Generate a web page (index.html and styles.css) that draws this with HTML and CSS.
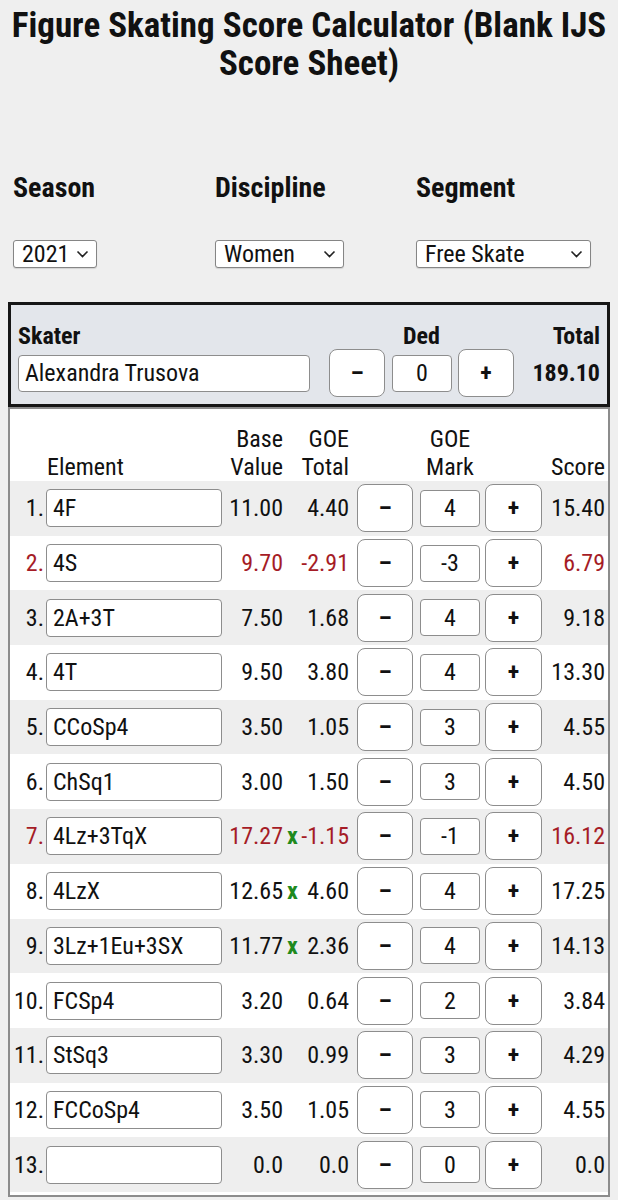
FILE: index.html
```html
<!DOCTYPE html>
<html lang="en">
  <head>
    <meta charset="UTF-8" />
    <meta name="viewport" content="width=device-width, initial-scale=1.0" />
    <title>Figure Skating Score Calculator</title>
    <link rel="stylesheet" href="styles.css">
  </head>

  <body>
    <h1 class="title">Figure Skating Score Calculator (Blank IJS Score Sheet)</h1>

    <div class="settings">
      <div class="setting">
        <h2>Season</h2>
        <span class="select-wrap">
          <select class="sel-season"><option>2021</option></select>
          <svg class="chevron" width="13" height="8" viewBox="0 0 13 8"><path d="M1.5 1.5l5 5 5-5" fill="none" stroke="#222" stroke-width="1.6" /></svg>
        </span>
      </div>
      <div class="setting">
        <h2>Discipline</h2>
        <span class="select-wrap">
          <select class="sel-discipline"><option>Women</option></select>
          <svg class="chevron" width="13" height="8" viewBox="0 0 13 8"><path d="M1.5 1.5l5 5 5-5" fill="none" stroke="#222" stroke-width="1.6" /></svg>
        </span>
      </div>
      <div class="setting">
        <h2>Segment</h2>
        <span class="select-wrap">
          <select class="sel-segment"><option>Free Skate</option></select>
          <svg class="chevron" width="13" height="8" viewBox="0 0 13 8"><path d="M1.5 1.5l5 5 5-5" fill="none" stroke="#222" stroke-width="1.6" /></svg>
        </span>
      </div>
    </div>

    <div class="skater">
      <div class="lbl">Skater</div>
      <div class="lbl center">Ded</div>
      <div class="lbl right">Total</div>
      <input class="skater-name" type="text" value="Alexandra Trusova" />
      <div class="stepper">
        <button class="btn">&ndash;</button>
        <input class="mark" type="text" value="0" />
        <button class="btn">+</button>
      </div>
      <div class="total">189.10</div>
    </div>

    <div class="sheet">
      <div class="row head">
        <div></div>
        <div class="h-el">Element</div>
        <div class="num">Base<br />Value</div>
        <div class="num">GOE<br />Total</div>
        <div></div>
        <div class="h-mark">GOE<br />Mark</div>
        <div></div>
        <div class="num">Score</div>
      </div>

      <div class="rows">
        <div class="row">
          <div class="no">1.</div><input class="el" value="4F" />
          <div class="num">11.00</div><div class="goe"><span class="v">4.40</span></div>
          <button class="btn">&ndash;</button><input class="mark" value="4" /><button class="btn">+</button>
          <div class="num">15.40</div>
        </div>
        <div class="row red">
          <div class="no">2.</div><input class="el" value="4S" />
          <div class="num">9.70</div><div class="goe"><span class="v">-2.91</span></div>
          <button class="btn">&ndash;</button><input class="mark" value="-3" /><button class="btn">+</button>
          <div class="num">6.79</div>
        </div>
        <div class="row">
          <div class="no">3.</div><input class="el" value="2A+3T" />
          <div class="num">7.50</div><div class="goe"><span class="v">1.68</span></div>
          <button class="btn">&ndash;</button><input class="mark" value="4" /><button class="btn">+</button>
          <div class="num">9.18</div>
        </div>
        <div class="row">
          <div class="no">4.</div><input class="el" value="4T" />
          <div class="num">9.50</div><div class="goe"><span class="v">3.80</span></div>
          <button class="btn">&ndash;</button><input class="mark" value="4" /><button class="btn">+</button>
          <div class="num">13.30</div>
        </div>
        <div class="row">
          <div class="no">5.</div><input class="el" value="CCoSp4" />
          <div class="num">3.50</div><div class="goe"><span class="v">1.05</span></div>
          <button class="btn">&ndash;</button><input class="mark" value="3" /><button class="btn">+</button>
          <div class="num">4.55</div>
        </div>
        <div class="row">
          <div class="no">6.</div><input class="el" value="ChSq1" />
          <div class="num">3.00</div><div class="goe"><span class="v">1.50</span></div>
          <button class="btn">&ndash;</button><input class="mark" value="3" /><button class="btn">+</button>
          <div class="num">4.50</div>
        </div>
        <div class="row red">
          <div class="no">7.</div><input class="el" value="4Lz+3TqX" />
          <div class="num">17.27</div><div class="goe"><span class="x">x</span><span class="v">-1.15</span></div>
          <button class="btn">&ndash;</button><input class="mark" value="-1" /><button class="btn">+</button>
          <div class="num">16.12</div>
        </div>
        <div class="row">
          <div class="no">8.</div><input class="el" value="4LzX" />
          <div class="num">12.65</div><div class="goe"><span class="x">x</span><span class="v">4.60</span></div>
          <button class="btn">&ndash;</button><input class="mark" value="4" /><button class="btn">+</button>
          <div class="num">17.25</div>
        </div>
        <div class="row">
          <div class="no">9.</div><input class="el" value="3Lz+1Eu+3SX" />
          <div class="num">11.77</div><div class="goe"><span class="x">x</span><span class="v">2.36</span></div>
          <button class="btn">&ndash;</button><input class="mark" value="4" /><button class="btn">+</button>
          <div class="num">14.13</div>
        </div>
        <div class="row">
          <div class="no">10.</div><input class="el" value="FCSp4" />
          <div class="num">3.20</div><div class="goe"><span class="v">0.64</span></div>
          <button class="btn">&ndash;</button><input class="mark" value="2" /><button class="btn">+</button>
          <div class="num">3.84</div>
        </div>
        <div class="row">
          <div class="no">11.</div><input class="el" value="StSq3" />
          <div class="num">3.30</div><div class="goe"><span class="v">0.99</span></div>
          <button class="btn">&ndash;</button><input class="mark" value="3" /><button class="btn">+</button>
          <div class="num">4.29</div>
        </div>
        <div class="row">
          <div class="no">12.</div><input class="el" value="FCCoSp4" />
          <div class="num">3.50</div><div class="goe"><span class="v">1.05</span></div>
          <button class="btn">&ndash;</button><input class="mark" value="3" /><button class="btn">+</button>
          <div class="num">4.55</div>
        </div>
        <div class="row">
          <div class="no">13.</div><input class="el" value="" />
          <div class="num">0.0</div><div class="goe"><span class="v">0.0</span></div>
          <button class="btn">&ndash;</button><input class="mark" value="0" /><button class="btn">+</button>
          <div class="num">0.0</div>
        </div>
      </div>
    </div>
  </body>
</html>
```

FILE: styles.css
```css
* {
  box-sizing: border-box;
}

html,
body {
  margin: 0;
  background-color: #efefef;
}

body {
  padding: 0 8px;
  font-family: "Roboto Condensed", Roboto, "Noto Sans", sans-serif;
  color: #111;
}

input,
button,
select {
  font-family: inherit;
  color: #111;
}

.title {
  margin: 0;
  padding-top: 7px;
  font-size: 35px;
  line-height: 38px;
  font-weight: 700;
  text-align: center;
}

/* season / discipline / segment */
.settings {
  display: grid;
  grid-template-columns: 202px 201px 1fr;
  margin-top: 89px;
  padding-left: 5px;
}

.settings h2 {
  margin: 0;
  font-size: 28px;
  line-height: 32px;
  font-weight: 700;
}

.select-wrap {
  position: relative;
  display: inline-block;
  margin-top: 36px;
}

.settings select {
  display: block;
  height: 28px;
  padding: 0 0 0 8px;
  font-size: 24px;
  line-height: 26px;
  background-color: #fff;
  border: 1px solid #858585;
  border-radius: 3px;
  box-shadow: 0 1px 1px rgba(0, 0, 0, 0.12);
  appearance: none;
  -webkit-appearance: none;
}

.chevron {
  position: absolute;
  right: 8px;
  top: 10px;
  pointer-events: none;
}

.sel-season {
  width: 84px;
}

.sel-discipline {
  width: 129px;
}

.sel-segment {
  width: 175px;
}

/* skater box */
.skater {
  display: grid;
  grid-template-columns: 311px 185px 1fr;
  align-items: center;
  margin-top: 34px;
  padding: 19px 7px 7px;
  background-color: #e3e6eb;
  border: 3px solid #161616;
}

.lbl {
  font-size: 24px;
  line-height: 25px;
  font-weight: 700;
}

.lbl.center {
  text-align: center;
}

.lbl.right {
  text-align: right;
}

.skater-name {
  width: 292px;
  height: 37px;
  padding: 0 6px;
  font-size: 24px;
  background-color: #fff;
  border: 1px solid #8d8d8d;
  border-radius: 4px;
}

.stepper {
  display: flex;
  align-items: center;
}

.stepper .mark {
  margin: 0 6px 0 7px;
}

.total {
  text-align: right;
  font-size: 24px;
  font-weight: 700;
}

/* score sheet */
.sheet {
  padding-bottom: 3px;
  background-color: #fff;
  border: 2px solid #8c8c8c;
}

.row {
  display: grid;
  grid-template-columns: 36px 176px 61px 66px 64px 67px 62px 1fr;
  align-items: center;
  height: 54.7px;
  padding-right: 3px;
  font-size: 24px;
}

.rows .row:nth-child(odd) {
  background-color: #eee;
}

.row.head {
  height: auto;
  padding-top: 16px;
  align-items: end;
  line-height: 28px;
}

.h-el {
  padding-left: 1px;
}

.h-mark {
  text-align: center;
  padding-left: 7px;
}

.no {
  text-align: right;
  padding-right: 2px;
}

.num {
  text-align: right;
}

.goe {
  display: flex;
  padding-left: 4px;
}

.goe .v {
  margin-left: auto;
}

.x {
  color: #1e8a1e;
  font-weight: 700;
}

.red {
  color: #a51c26;
}

.el {
  width: 176px;
  height: 38px;
  padding: 0 6px;
  font-size: 24px;
  background-color: #fff;
  border: 1px solid #8d8d8d;
  border-radius: 4px;
}

.mark {
  width: 60px;
  height: 37px;
  padding: 0;
  font-size: 24px;
  text-align: center;
  background-color: #fff;
  border: 1px solid #8d8d8d;
  border-radius: 4px;
}

.row .mark {
  justify-self: end;
}

.btn {
  width: 56px;
  height: 48px;
  padding: 0;
  font-size: 24px;
  font-weight: 700;
  background-color: #fff;
  border: 1px solid #8d8d8d;
  border-radius: 8px;
}

.row .btn {
  justify-self: end;
}

.row .btn + .mark + .btn {
  width: 57px;
}
```
